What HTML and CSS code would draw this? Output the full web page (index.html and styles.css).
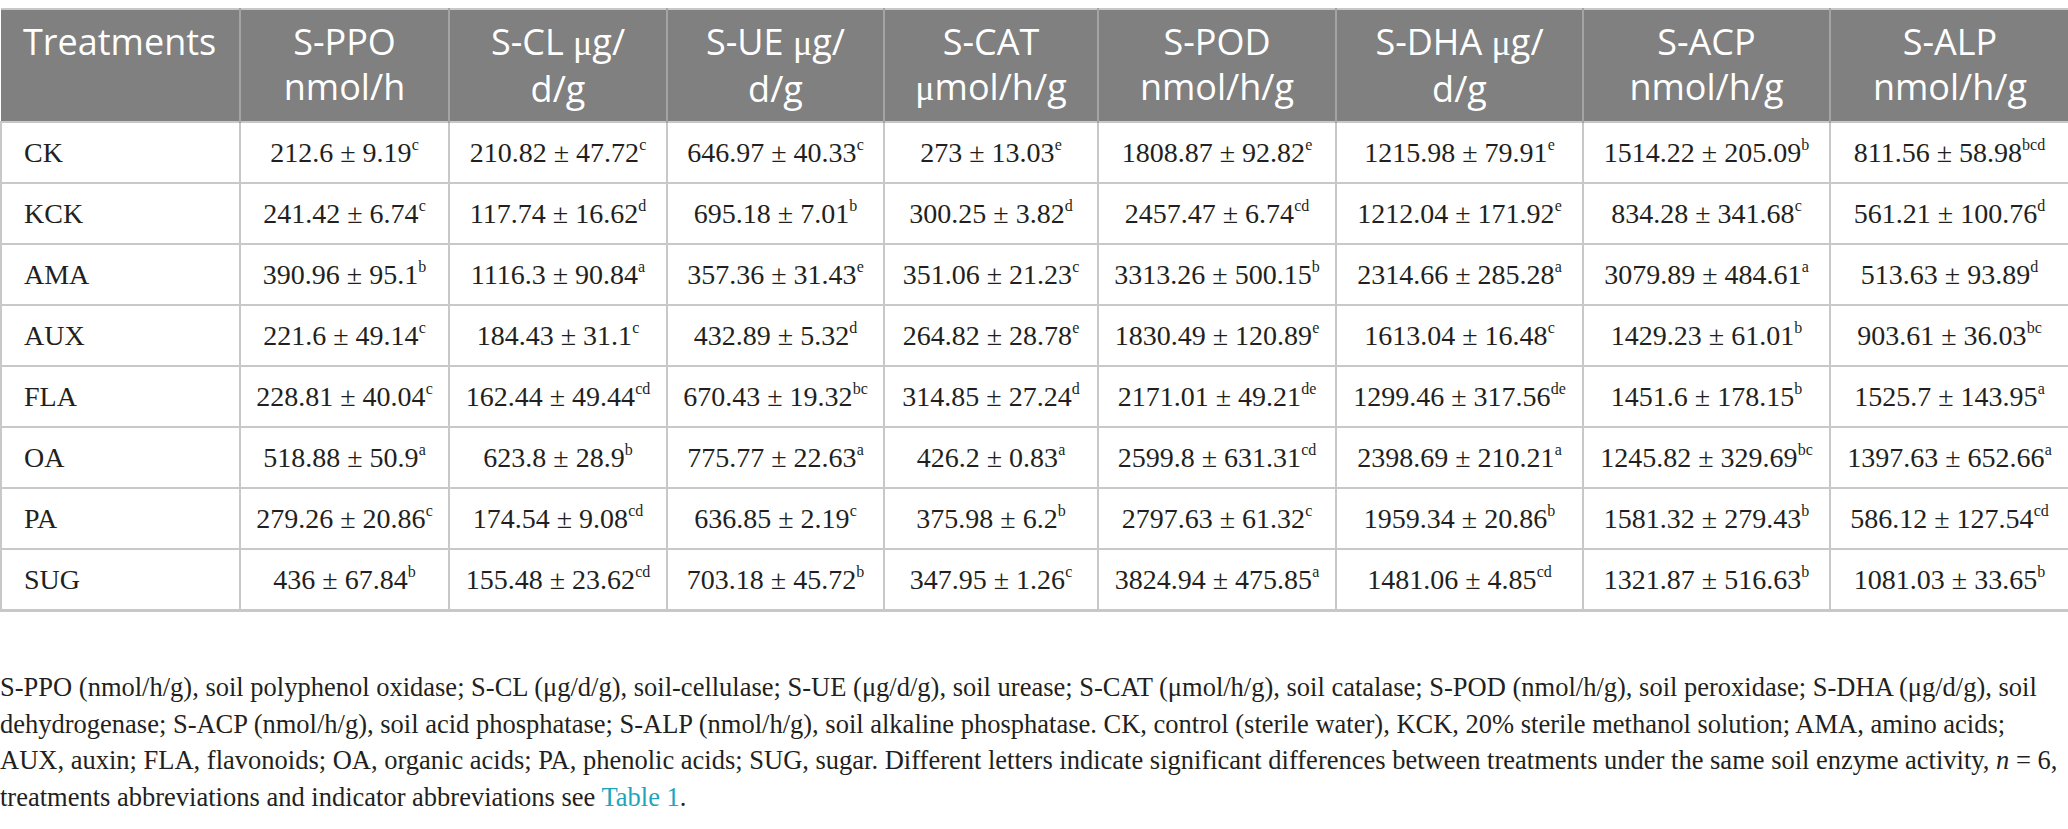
FILE: index.html
```html
<!DOCTYPE html>
<html lang="en">
<head>
	<meta charset="utf-8"/>
	<title>Soil enzyme activity under root exudate treatments</title>
	<link rel="stylesheet" href="styles.css">
</head>
<body>

<div id="main">
	<table class="data">
		<colgroup>
			<col style="width: 239px">
			<col style="width: 209px">
			<col style="width: 218px">
			<col style="width: 217px">
			<col style="width: 214px">
			<col style="width: 238px">
			<col style="width: 247px">
			<col style="width: 247px">
			<col style="width: 239px">
		</colgroup>
		<thead>
			<tr>
				<th class="first">Treatments</th>
				<th>S-PPO<br/>nmol/h</th>
				<th>S-CL <span class="mu">μ</span>g/<br/>d/g</th>
				<th>S-UE <span class="mu">μ</span>g/<br/>d/g</th>
				<th>S-CAT<br/><span class="mu">μ</span>mol/h/g</th>
				<th>S-POD<br/>nmol/h/g</th>
				<th>S-DHA <span class="mu">μ</span>g/<br/>d/g</th>
				<th>S-ACP<br/>nmol/h/g</th>
				<th>S-ALP<br/>nmol/h/g</th>
			</tr>
		</thead>
		<tbody>
			<tr>
				<td class="first">CK</td>
				<td>212.6 ± 9.19<sup>c</sup></td>
				<td>210.82 ± 47.72<sup>c</sup></td>
				<td>646.97 ± 40.33<sup>c</sup></td>
				<td>273 ± 13.03<sup>e</sup></td>
				<td>1808.87 ± 92.82<sup>e</sup></td>
				<td>1215.98 ± 79.91<sup>e</sup></td>
				<td>1514.22 ± 205.09<sup>b</sup></td>
				<td>811.56 ± 58.98<sup>bcd</sup></td>
			</tr>
			<tr>
				<td class="first">KCK</td>
				<td>241.42 ± 6.74<sup>c</sup></td>
				<td>117.74 ± 16.62<sup>d</sup></td>
				<td>695.18 ± 7.01<sup>b</sup></td>
				<td>300.25 ± 3.82<sup>d</sup></td>
				<td>2457.47 ± 6.74<sup>cd</sup></td>
				<td>1212.04 ± 171.92<sup>e</sup></td>
				<td>834.28 ± 341.68<sup>c</sup></td>
				<td>561.21 ± 100.76<sup>d</sup></td>
			</tr>
			<tr>
				<td class="first">AMA</td>
				<td>390.96 ± 95.1<sup>b</sup></td>
				<td>1116.3 ± 90.84<sup>a</sup></td>
				<td>357.36 ± 31.43<sup>e</sup></td>
				<td>351.06 ± 21.23<sup>c</sup></td>
				<td>3313.26 ± 500.15<sup>b</sup></td>
				<td>2314.66 ± 285.28<sup>a</sup></td>
				<td>3079.89 ± 484.61<sup>a</sup></td>
				<td>513.63 ± 93.89<sup>d</sup></td>
			</tr>
			<tr>
				<td class="first">AUX</td>
				<td>221.6 ± 49.14<sup>c</sup></td>
				<td>184.43 ± 31.1<sup>c</sup></td>
				<td>432.89 ± 5.32<sup>d</sup></td>
				<td>264.82 ± 28.78<sup>e</sup></td>
				<td>1830.49 ± 120.89<sup>e</sup></td>
				<td>1613.04 ± 16.48<sup>c</sup></td>
				<td>1429.23 ± 61.01<sup>b</sup></td>
				<td>903.61 ± 36.03<sup>bc</sup></td>
			</tr>
			<tr>
				<td class="first">FLA</td>
				<td>228.81 ± 40.04<sup>c</sup></td>
				<td>162.44 ± 49.44<sup>cd</sup></td>
				<td>670.43 ± 19.32<sup>bc</sup></td>
				<td>314.85 ± 27.24<sup>d</sup></td>
				<td>2171.01 ± 49.21<sup>de</sup></td>
				<td>1299.46 ± 317.56<sup>de</sup></td>
				<td>1451.6 ± 178.15<sup>b</sup></td>
				<td>1525.7 ± 143.95<sup>a</sup></td>
			</tr>
			<tr>
				<td class="first">OA</td>
				<td>518.88 ± 50.9<sup>a</sup></td>
				<td>623.8 ± 28.9<sup>b</sup></td>
				<td>775.77 ± 22.63<sup>a</sup></td>
				<td>426.2 ± 0.83<sup>a</sup></td>
				<td>2599.8 ± 631.31<sup>cd</sup></td>
				<td>2398.69 ± 210.21<sup>a</sup></td>
				<td>1245.82 ± 329.69<sup>bc</sup></td>
				<td>1397.63 ± 652.66<sup>a</sup></td>
			</tr>
			<tr>
				<td class="first">PA</td>
				<td>279.26 ± 20.86<sup>c</sup></td>
				<td>174.54 ± 9.08<sup>cd</sup></td>
				<td>636.85 ± 2.19<sup>c</sup></td>
				<td>375.98 ± 6.2<sup>b</sup></td>
				<td>2797.63 ± 61.32<sup>c</sup></td>
				<td>1959.34 ± 20.86<sup>b</sup></td>
				<td>1581.32 ± 279.43<sup>b</sup></td>
				<td>586.12 ± 127.54<sup>cd</sup></td>
			</tr>
			<tr>
				<td class="first">SUG</td>
				<td>436 ± 67.84<sup>b</sup></td>
				<td>155.48 ± 23.62<sup>cd</sup></td>
				<td>703.18 ± 45.72<sup>b</sup></td>
				<td>347.95 ± 1.26<sup>c</sup></td>
				<td>3824.94 ± 475.85<sup>a</sup></td>
				<td>1481.06 ± 4.85<sup>cd</sup></td>
				<td>1321.87 ± 516.63<sup>b</sup></td>
				<td>1081.03 ± 33.65<sup>b</sup></td>
			</tr>
		</tbody>
	</table>

	<p class="caption">S-PPO (nmol/h/g), soil polyphenol oxidase; S-CL (μg/d/g), soil-cellulase; S-UE (μg/d/g), soil urease; S-CAT (μmol/h/g), soil catalase; S-POD (nmol/h/g), soil peroxidase; S-DHA (μg/d/g), soil<br/>
	dehydrogenase; S-ACP (nmol/h/g), soil acid phosphatase; S-ALP (nmol/h/g), soil alkaline phosphatase. CK, control (sterile water), KCK, 20% sterile methanol solution; AMA, amino acids;<br/>
	AUX, auxin; FLA, flavonoids; OA, organic acids; PA, phenolic acids; SUG, sugar. Different letters indicate significant differences between treatments under the same soil enzyme activity, <em>n</em> = 6,<br/>
	treatments abbreviations and indicator abbreviations see <a href="#">Table 1</a>.</p>
</div>
</body>
</html>
```

FILE: styles.css
```css
body {
	background: #fff;
	color: #231f20;
	font: 24px 'Liberation Serif', 'Times New Roman', serif;
	margin: 0;
	padding: 0;
}

#main {
	padding: 8px 0 0;
}

table.data {
	width: 2068px;
	table-layout: fixed;
	border-collapse: collapse;
	border-top: 2px solid #c8c8c8;
	border-bottom: 3px solid #c8c8c8;
}

table.data th {
	background: #7f807f;
	color: #fff;
	font: 36px/45px 'Open Sans', 'DejaVu Sans', sans-serif;
	font-weight: normal;
	text-align: center;
	vertical-align: top;
	padding: 9px 2px 10px;
	border-left: 2px solid #a3a4a3;
	border-right: 2px solid #a3a4a3;
	white-space: nowrap;
}

table.data td {
	font-size: 28px;
	text-align: center;
	vertical-align: middle;
	height: 59px;
	padding: 0 2px;
	border: 2px solid #c8c8c8;
	white-space: nowrap;
}

table.data .first {
	text-align: left;
	padding-left: 22px;
}

table.data th.first {
	border-left: none;
}

table.data th:last-child {
	border-right: none;
}

.mu {
	font-family: 'Liberation Serif', serif;
}

sup {
	font-size: 16px;
	line-height: 0;
	vertical-align: 12px;
}

.caption {
	margin: 57px 0 0;
	font-size: 26.5px;
	line-height: 36.5px;
	white-space: nowrap;
}

.caption a {
	color: #1ea5bd;
	text-decoration: none;
}
```
